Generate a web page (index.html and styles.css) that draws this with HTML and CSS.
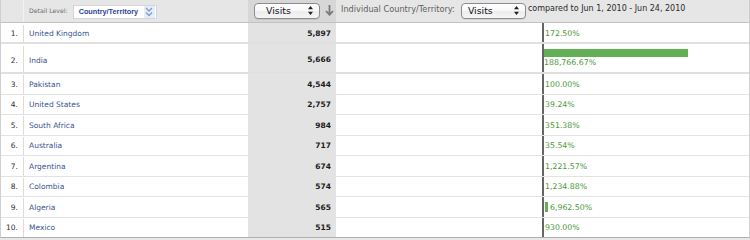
FILE: index.html
```html
<!DOCTYPE html>
<html>
<head>
<meta charset="utf-8">
<link rel="stylesheet" href="styles.css">
</head>
<body>
<div class="report">
  <div class="hdr">
    <div class="c-rank hdr-rank"></div>
    <div class="c-name hdr-name">
      <span class="lbl-sm">Detail Level:</span>
      <div class="dim-select">
        <span class="dim-text">Country/Territory</span>
        <span class="chev"><svg width="8" height="10" viewBox="0 0 8 10"><path d="M1 1L4 4L7 1M1 5.5L4 8.5L7 5.5" stroke="#7c9ad6" stroke-width="1.3" fill="none"/></svg></span>
      </div>
    </div>
    <div class="c-val hdr-val">
      <div class="aqua aqua-a"><span>Visits</span><svg width="5" height="9" viewBox="0 0 5 9"><path d="M2.5 0L5 3.2H0z M2.5 9L0 5.8H5z" fill="#222"/></svg></div>
      <svg class="sort" width="9" height="11" viewBox="0 0 9 11"><path d="M4.5 0V9.5 M1 6L4.5 9.8L8 6" stroke="#7a7a7a" stroke-width="1.8" fill="none"/></svg>
    </div>
    <div class="hdr-cmp">
      <span class="lbl">Individual Country/Territory:</span>
      <div class="aqua aqua-b"><span>Visits</span><svg width="5" height="9" viewBox="0 0 5 9"><path d="M2.5 0L5 3.2H0z M2.5 9L0 5.8H5z" fill="#222"/></svg></div>
      <span class="cmp-text">compared to Jun 1, 2010 - Jun 24, 2010</span>
    </div>
  </div>

  <div class="row r1">
    <div class="c-rank">1.</div><div class="c-name"><a>United Kingdom</a></div><div class="c-val">5,897</div><div class="c-blank"></div><div class="c-delta"><span class="pct">172.50%</span></div>
  </div>
  <div class="row r2">
    <div class="c-rank">2.</div><div class="c-name"><a>India</a></div><div class="c-val">5,666</div><div class="c-blank"></div><div class="c-delta stack"><span class="bar bar-big" style="width:144px"></span><span class="pct">188,766.67%</span></div>
  </div>
  <div class="row">
    <div class="c-rank">3.</div><div class="c-name"><a>Pakistan</a></div><div class="c-val">4,544</div><div class="c-blank"></div><div class="c-delta"><span class="pct">100.00%</span></div>
  </div>
  <div class="row">
    <div class="c-rank">4.</div><div class="c-name"><a>United States</a></div><div class="c-val">2,757</div><div class="c-blank"></div><div class="c-delta"><span class="pct">39.24%</span></div>
  </div>
  <div class="row">
    <div class="c-rank">5.</div><div class="c-name"><a>South Africa</a></div><div class="c-val">984</div><div class="c-blank"></div><div class="c-delta"><span class="pct">351.38%</span></div>
  </div>
  <div class="row">
    <div class="c-rank">6.</div><div class="c-name"><a>Australia</a></div><div class="c-val">717</div><div class="c-blank"></div><div class="c-delta"><span class="pct">35.54%</span></div>
  </div>
  <div class="row">
    <div class="c-rank">7.</div><div class="c-name"><a>Argentina</a></div><div class="c-val">674</div><div class="c-blank"></div><div class="c-delta"><span class="pct">1,221.57%</span></div>
  </div>
  <div class="row">
    <div class="c-rank">8.</div><div class="c-name"><a>Colombia</a></div><div class="c-val">574</div><div class="c-blank"></div><div class="c-delta"><span class="pct">1,234.88%</span></div>
  </div>
  <div class="row">
    <div class="c-rank">9.</div><div class="c-name"><a>Algeria</a></div><div class="c-val">565</div><div class="c-blank"></div><div class="c-delta"><span class="bar bar-small" style="width:3px"></span><span class="pct">6,962.50%</span></div>
  </div>
  <div class="row last">
    <div class="c-rank">10.</div><div class="c-name"><a>Mexico</a></div><div class="c-val">515</div><div class="c-blank"></div><div class="c-delta"><span class="pct">930.00%</span></div>
  </div>
</div>
</body>
</html>
```

FILE: styles.css
```css
* { box-sizing: border-box; margin: 0; padding: 0; }
body {
  margin: 0;
  width: 750px;
  height: 240px;
  overflow: hidden;
  background: #e8e8e8;
  font-family: "DejaVu Sans", Verdana, sans-serif;
  font-size: 7.5px;
  color: #333;
}
.report {
  width: 750px;
  background: #fff;
  border-left: 1px solid #cfcfcf;
  border-right: 1px solid #cfcfcf;
  border-bottom: 1px solid #b0b0b0;
}
.hdr {
  display: flex;
  height: 23px;
  background: #e6e6e6;
  border-bottom: 1px solid #c2c2c2;
}
.row {
  display: flex;
  height: 20.5px;
  border-bottom: 1px solid #e3e3e3;
  padding-top: 1px;
}
.row.r1 { height: 21px; border-bottom: 2px solid #e0e0e0; padding-top: 2px; }
.row.r2 { height: 30px; border-bottom: 2px solid #e0e0e0; padding-top: 2px; }
.row.last { border-bottom: none; height: 19.5px; }

.c-rank {
  flex: none;
  width: 23px;
  border-right: 1px solid #dcdcdc;
  display: flex;
  align-items: center;
  justify-content: flex-end;
  padding-right: 5px;
  color: #2e2e2e;
}
.c-name {
  flex: none;
  width: 224px;
  display: flex;
  align-items: center;
  padding-left: 5px;
}
.c-name a { color: #37558f; text-decoration: none; }
.c-val {
  flex: none;
  width: 88px;
  background: #e3e3e3;
  display: flex;
  align-items: center;
  justify-content: flex-end;
  padding-right: 5px;
  font-weight: bold;
  color: #1a1a1a;
}
.row .c-val { margin-top: -2px; padding-top: 2px; }
.row.r1 .c-val, .row.r2 .c-val { margin-top: -2px; padding-top: 2px; }
.c-blank { flex: none; width: 206px; }
.c-delta {
  flex: none;
  width: 207px;
  border-left: 2px solid #666;
  display: flex;
  align-items: center;
  padding-left: 1px;
}
.row .c-delta { margin-top: -1px; padding-top: 1px; }
.row.r1 .c-delta, .row.r2 .c-delta { margin-top: -2px; padding-top: 2px; }
.row.r2 .c-val, .row.r2 .c-name, .row.r2 .c-rank { padding-top: 2px; }
.pct { color: #4c9838; font-size: 7.8px; }
.c-delta.stack {
  flex-direction: column;
  align-items: flex-start;
  justify-content: flex-start;
  padding-left: 0;
}
.bar { display: block; background: #63af54; }
.bar-big { height: 8px; margin-top: 3px; margin-bottom: 1px; }
.stack .pct { line-height: 10px; }
.bar-small { height: 10px; margin-right: 2px; }

/* header */
.hdr-rank { border-right: 1px solid #f3f3f3; }
.hdr-name { align-items: center; padding-top: 1px; }
.lbl-sm { color: #6f6f6f; font-size: 6.2px; margin-right: 5px; margin-top: -2px; }
.dim-select {
  display: flex;
  align-items: center;
  height: 14px;
  width: 84px;
  background: #fff;
  border: 1px solid #d6d6d6;
  padding-left: 5px;
}
.dim-text {
  font-family: "Liberation Sans", Arial, sans-serif;
  font-weight: bold;
  font-size: 7.3px;
  color: #2d3f9a;
  flex: 1;
}
.chev {
  width: 11px;
  height: 12px;
  background: #e6edf8;
  display: flex;
  align-items: center;
  justify-content: center;
  margin-right: 1px;
}
.hdr-val {
  background: #d7d7d7;
  justify-content: flex-start;
  padding-left: 6px;
  padding-right: 0;
  font-weight: normal;
}
.aqua {
  display: flex;
  align-items: center;
  justify-content: space-between;
  height: 16px;
  border: 1px solid #8c8c8c;
  border-radius: 4px;
  background: linear-gradient(#ffffff, #f7f7f7 50%, #ececec 55%, #f6f6f6);
  font-family: "DejaVu Sans", Verdana, sans-serif;
  font-size: 9.4px;
  color: #111;
  box-shadow: 0 1px 0 rgba(0,0,0,0.08);
}
.aqua-a { width: 66px; padding-left: 11px; padding-right: 6px; margin-top: -1px; }
.aqua-b { width: 65px; padding-left: 6px; padding-right: 6px; margin-top: -1px; }
.sort { margin-left: 5px; margin-top: -1px; }
.hdr-cmp {
  flex: none;
  width: 413px;
  display: flex;
  align-items: center;
  padding-left: 5px;
}
.lbl { color: #5f5f5f; font-size: 8.2px; margin-right: 6px; margin-top: -5px; }
.cmp-text { color: #2a2a2a; font-size: 8px; margin-left: 2px; margin-top: -5px; }
```
